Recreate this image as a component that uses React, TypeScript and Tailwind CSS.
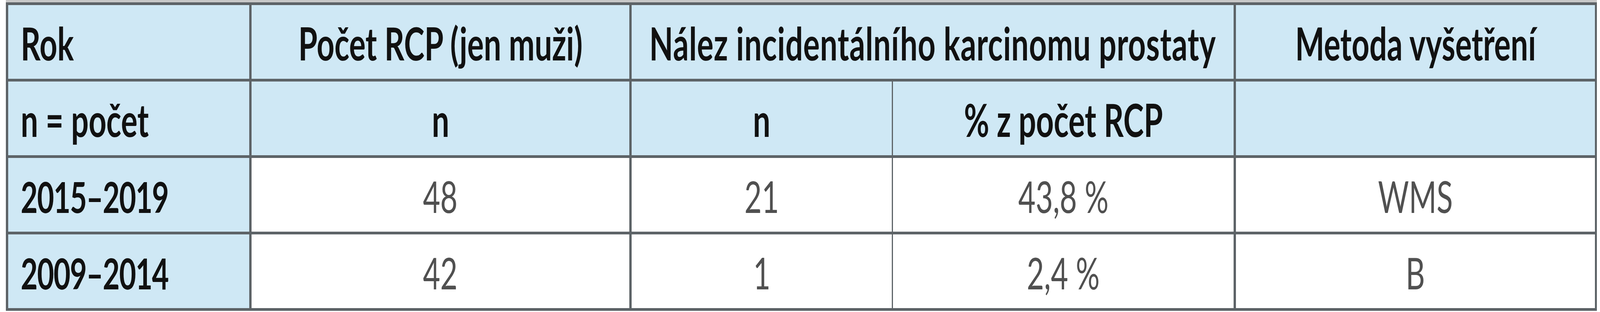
import React from 'react';

type CellProps = {
  children?: React.ReactNode;
  className?: string;
  left?: boolean;
};

function Cell({ children, className = '', left = false }: CellProps) {
  return (
    <div className={`flex h-[196px] min-w-0 items-center border-b-[7px] border-[#5d6367] pt-[6px] ${className}`}>
      {children !== undefined && (
        <span className={`inline-block whitespace-nowrap scale-x-[0.682] ${left ? 'origin-left' : 'origin-center'}`}>
          {children}
        </span>
      )}
    </div>
  );
}

const rows = [
  { rok: '2015–2019', rcp: '48', n: '21', pct: '43,8 %', metoda: 'WMS' },
  { rok: '2009–2014', rcp: '42', n: '1', pct: '2,4 %', metoda: 'B' },
];

export default function App() {
  const head = 'justify-center bg-[#cfe8f5] text-[116px] font-bold text-[#111]';
  const label = 'bg-[#cfe8f5] pl-[32px] text-[116px] font-bold text-[#111]';
  const year = 'bg-[#cfe8f5] pl-[32px] text-[110px] tracking-[-0.02em] font-bold text-[#111]';
  const data = 'justify-center bg-white font-normal text-[#505050]';

  return (
    <div className="min-h-[800px] overflow-hidden bg-white font-['Lato',sans-serif] text-[112px] leading-none">
      <div className="ml-[15px] mr-[8px] border-t-[6px] border-[#c8c8c8]">
        <div className="grid grid-cols-[913fr_1427fr_981fr_1287fr_1355fr] border-l-[6px] border-t-[7px] border-[#5d6367]">
          <Cell left className={`${label} border-r-[6px]`}>Rok</Cell>
          <Cell className={`${head} border-r-[6px]`}>Počet RCP (jen muži)</Cell>
          <Cell className={`${head} col-span-2 border-r-[6px] tracking-[0.01em]`}>Nález incidentálního karcinomu prostaty</Cell>
          <Cell className={`${head} border-r-[5px]`}>Metoda vyšetření</Cell>

          <Cell left className={`${label} border-r-[6px]`}>n = počet</Cell>
          <Cell className={`${head} border-r-[6px]`}>n</Cell>
          <Cell className={`${head} border-r-[3px]`}>n</Cell>
          <Cell className={`${head} border-r-[6px]`}>% z počet RCP</Cell>
          <Cell className={`${head} border-r-[5px]`} />

          {rows.map((r) => (
            <React.Fragment key={r.rok}>
              <Cell left className={`${year} border-r-[6px]`}>{r.rok}</Cell>
              <Cell className={`${data} border-r-[6px]`}>{r.rcp}</Cell>
              <Cell className={`${data} border-r-[3px]`}>{r.n}</Cell>
              <Cell className={`${data} border-r-[6px]`}>{r.pct}</Cell>
              <Cell className={`${data} border-r-[5px]`}>{r.metoda}</Cell>
            </React.Fragment>
          ))}
        </div>
      </div>
    </div>
  );
}
